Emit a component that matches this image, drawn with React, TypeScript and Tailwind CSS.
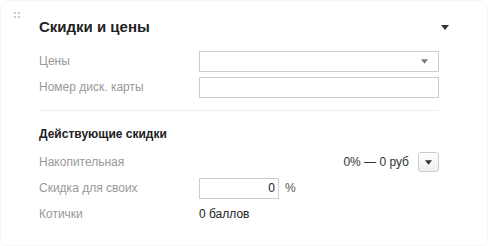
import React from 'react'

function Caret({ className = '' }: { className?: string }) {
  return (
    <svg width="8" height="5" viewBox="0 0 8 5" className={className}>
      <path d="M0 0h8L4 5z" fill="currentColor" />
    </svg>
  )
}

function Row({ label, children }: { label: string; children?: React.ReactNode }) {
  return (
    <div className="flex items-center h-[26px]">
      <div className="w-[160px] shrink-0 text-[12px] text-[#999]">{label}</div>
      <div className="flex-1 flex items-center">{children}</div>
    </div>
  )
}

export default function App() {
  return (
    <div
      className="w-[488px] h-[246px] bg-white rounded-[6px] border border-[#f7f7f7] relative text-[#222]"
      style={{ fontFamily: '"Liberation Sans", Arial, sans-serif' }}
    >
      {/* drag handle */}
      <div className="absolute left-[13px] top-[11px] grid grid-cols-2 gap-[2px]">
        <span className="w-[2px] h-[2px] bg-[#ccc]" />
        <span className="w-[2px] h-[2px] bg-[#ccc]" />
        <span className="w-[2px] h-[2px] bg-[#ccc]" />
        <span className="w-[2px] h-[2px] bg-[#ccc]" />
      </div>

      <div className="pl-[38px] pr-[48px] pt-[16px]">
        <div className="flex items-center justify-between h-[20px]">
          <h2 className="text-[15px] font-bold">Скидки и цены</h2>
          <Caret className="text-[#333] -mr-[10px] mt-[1px]" />
        </div>

        <div className="mt-[11px] flex flex-col gap-0">
          <Row label="Цены">
            <div className="w-full h-[21px] border border-[#ccc] flex items-center justify-end pr-[10px]">
              <Caret className="text-[#777] w-[7px]" />
            </div>
          </Row>
          <Row label="Номер диск. карты">
            <div className="w-full h-[21px] border border-[#ccc]" />
          </Row>
        </div>

        <div className="border-t border-[#eee] mt-[10px]" />

        <h3 className="text-[12px] font-bold mt-[16px] h-[14px] leading-[14px]">Действующие скидки</h3>

        <div className="mt-[8px] flex flex-col">
          <Row label="Накопительная">
            <div className="flex-1 text-right text-[12px] text-[#333] pr-[9px]">0% — 0 руб</div>
            <button className="w-[21px] h-[20px] border border-[#ccc] rounded-[3px] bg-gradient-to-b from-white to-[#eee] flex items-center justify-center">
              <Caret className="text-[#333] w-[7px]" />
            </button>
          </Row>
          <Row label="Скидка для своих">
            <div className="w-[80px] h-[21px] border border-[#ccc] text-right text-[12px] leading-[19px] pr-[3px]">0</div>
            <span className="ml-[6px] text-[12px] text-[#555]">%</span>
          </Row>
          <Row label="Котички">
            <span className="text-[12px] text-[#222]">0 баллов</span>
          </Row>
        </div>
      </div>
    </div>
  )
}
